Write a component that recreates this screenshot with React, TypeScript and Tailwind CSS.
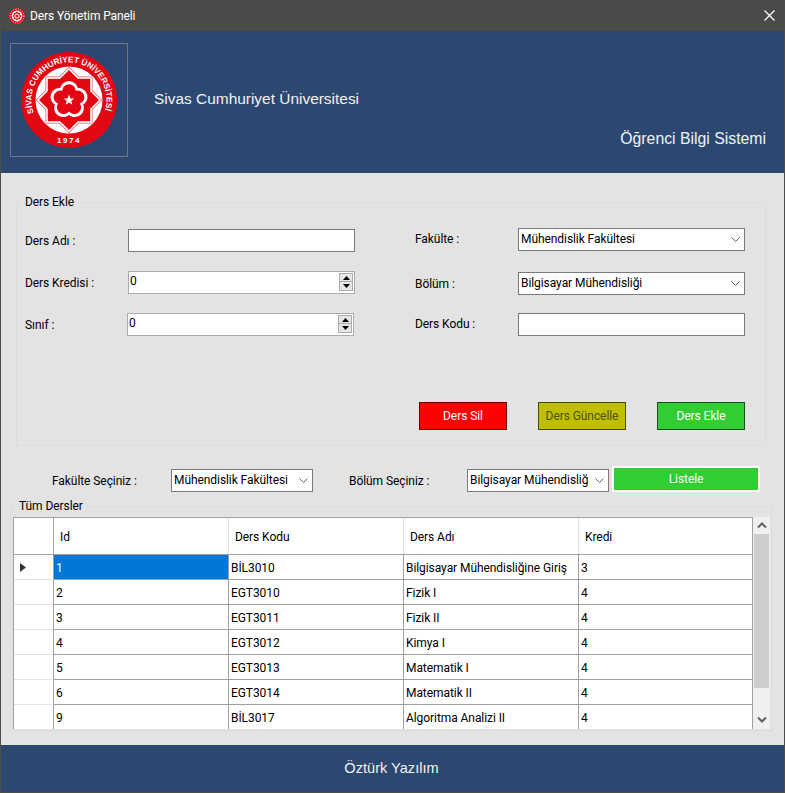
import React from "react";

const ui = "font-['Roboto','Noto_Sans',sans-serif]";

function Logo() {
  const petals = [0, 72, 144, 216, 288];
  return (
    <svg width="96" height="96" viewBox="0 0 96 96">
      <defs>
        <path id="topArc" d="M 12.8 60.8 A 37.5 37.5 0 1 1 83.2 60.8" />
      </defs>
      <circle cx="48" cy="48" r="48" fill="#e30613" />
      <circle cx="48" cy="48" r="33.5" fill="#fff" />
      <rect x="24.5" y="24.5" width="47" height="47" fill="#e8505a" />
      <rect x="24.5" y="24.5" width="47" height="47" fill="#e8505a" transform="rotate(45 48 48)" />
      <rect x="25.2" y="25.2" width="45.6" height="45.6" fill="#fff" />
      <rect x="25.2" y="25.2" width="45.6" height="45.6" fill="#fff" transform="rotate(45 48 48)" />
      <rect x="26.8" y="26.8" width="42.4" height="42.4" fill="#e30613" />
      <rect x="26.8" y="26.8" width="42.4" height="42.4" fill="#e30613" transform="rotate(45 48 48)" />
      {petals.map((a) => (
        <circle key={a} cx="48" cy="38" r="9" fill="#fff" transform={`rotate(${a} 48 48)`} />
      ))}
      {petals.map((a) => (
        <circle key={a} cx="48" cy="39" r="6.8" fill="#e30613" transform={`rotate(${a} 48 48)`} />
      ))}
      <circle cx="48" cy="48" r="9.5" fill="#e30613" />
      <polygon points="48,42.6 49.4,46.4 53.4,46.4 50.2,48.9 51.4,52.8 48,50.5 44.6,52.8 45.8,48.9 42.6,46.4 46.6,46.4" fill="#fff" />
      <text fontFamily="'Liberation Sans',sans-serif" fontSize="8.2" fontWeight="700" fill="#fff">
        <textPath href="#topArc" textLength="141" lengthAdjust="spacing">SİVAS CUMHURİYET ÜNİVERSİTESİ</textPath>
      </text>
      <text x="48" y="90.5" textAnchor="middle" fontFamily="'Liberation Sans',sans-serif" fontSize="8" fontWeight="700" fill="#fff" letterSpacing="1.6">1974</text>
    </svg>
  );
}

function TitleIcon() {
  return (
    <svg width="16" height="16" viewBox="0 0 16 16">
      <circle cx="8" cy="8" r="8" fill="#e30613" />
      <circle cx="8" cy="8" r="7" fill="none" stroke="#fff" strokeWidth="1" strokeDasharray="1 1.4" />
      <circle cx="8" cy="8" r="5.4" fill="#fff" />
      <rect x="4.9" y="4.9" width="6.2" height="6.2" fill="#e30613" />
      <rect x="4.9" y="4.9" width="6.2" height="6.2" fill="#e30613" transform="rotate(45 8 8)" />
      <circle cx="8" cy="8" r="2.6" fill="#f7c6c9" />
      <circle cx="8" cy="8" r="1.3" fill="#e30613" />
    </svg>
  );
}

function Chevron({ className = "" }: { className?: string }) {
  return (
    <svg width="9" height="5" viewBox="0 0 9 5" className={className}>
      <path d="M0.5 0.5 L4.5 4.5 L8.5 0.5" fill="none" stroke="#606060" strokeWidth="1" />
    </svg>
  );
}

function Combo({ text, w }: { text: string; w: string }) {
  return (
    <div className={`${w} h-[23px] bg-white border border-[#7a7a7a] flex items-center pl-[2px] pr-[4px] text-black`}>
      <span className="flex-1 whitespace-nowrap pb-[1px]">{text}</span>
      <Chevron className="shrink-0" />
    </div>
  );
}

function Spin() {
  return (
    <div className="w-[227px] h-[23px] bg-white border border-[#acacac] flex items-start text-black">
      <span className="flex-1 pl-[1px] leading-[18px]">0</span>
      <div className="w-[14px] h-[18px] mt-[1px] mr-[1px] flex flex-col">
        <div className="h-[9px] bg-[#e6e6e6] border border-[#acacac] flex items-center justify-center">
          <svg width="7" height="4" viewBox="0 0 7 4"><path d="M3.5 0 L7 4 H0 Z" fill="#000" /></svg>
        </div>
        <div className="h-[9px] bg-[#e6e6e6] border border-[#acacac] border-t-0 flex items-center justify-center">
          <svg width="7" height="4" viewBox="0 0 7 4"><path d="M0 0 H7 L3.5 4 Z" fill="#000" /></svg>
        </div>
      </div>
    </div>
  );
}

function Btn({ text, cls }: { text: string; cls: string }) {
  return <div className={`w-[88px] h-[28px] border flex items-center justify-center ${cls}`}>{text}</div>;
}

const rows = [
  ["1", "BİL3010", "Bilgisayar Mühendisliğine Giriş", "3"],
  ["2", "EGT3010", "Fizik I", "4"],
  ["3", "EGT3011", "Fizik II", "4"],
  ["4", "EGT3012", "Kimya I", "4"],
  ["5", "EGT3013", "Matematik I", "4"],
  ["6", "EGT3014", "Matematik II", "4"],
  ["9", "BİL3017", "Algoritma Analizi II", "4"],
];

const cols = "grid grid-cols-[40px_175px_175px_175px_173px]";

function Table() {
  return (
    <div className="w-[740px] h-[212px] bg-white overflow-hidden border-t border-x border-[#a0a0a0] text-black">
      <div className={`${cols} h-[37px] border-b border-[#a0a0a0]`}>
        <div className="border-r border-[#a0a0a0]" />
        {["Id", "Ders Kodu", "Ders Adı", "Kredi"].map((h) => (
          <div key={h} className="border-r border-[#e3e3e3] last:border-r-0 pl-[6px] pt-[1px] flex items-center">{h}</div>
        ))}
      </div>
      {rows.map((r, i) => (
        <div key={r[0]} className={`${cols} h-[25px]`}>
          <div className="border-r border-b border-r-[#a0a0a0] border-b-[#e3e3e3] flex items-center pl-[6px]">
            {i === 0 && <svg width="6" height="9" viewBox="0 0 6 9"><path d="M0 0 L6 4.5 L0 9 Z" fill="#333" /></svg>}
          </div>
          {r.map((c, j) => (
            <div key={j} className={`flex items-center pl-[2px] pt-[1px] border-b border-r border-[#a0a0a0] last:border-r-0 whitespace-nowrap ${i === 0 && j === 0 ? "bg-[#0078d7] text-white" : ""}`}>{c}</div>
          ))}
        </div>
      ))}
    </div>
  );
}

function Scrollbar() {
  return (
    <div className="w-[17px] h-[212px] bg-[#f0f0f0] flex flex-col items-center">
      <div className="h-[17px] shrink-0 flex items-center justify-center">
        <svg width="10" height="7" viewBox="0 0 10 7"><path d="M1 5.5 L5 1.5 L9 5.5" fill="none" stroke="#606060" strokeWidth="2" /></svg>
      </div>
      <div className="w-[15px] h-[154px] bg-[#cdcdcd]" />
      <div className="flex-1" />
      <div className="h-[16px] shrink-0 flex items-center justify-center mb-[2px]">
        <svg width="10" height="7" viewBox="0 0 10 7"><path d="M1 1.5 L5 5.5 L9 1.5" fill="none" stroke="#606060" strokeWidth="2" /></svg>
      </div>
    </div>
  );
}

export default function App() {
  return (
    <div className={`${ui} w-[785px] h-[793px] bg-[#e3e3e3] border-x border-b border-[#4d4d4d] flex flex-col overflow-hidden`}>
      <div className="h-[31px] shrink-0 bg-[#4b4a48] flex items-center text-white text-[12px] tracking-[-0.1px] pl-[8px] pr-[9px]">
        <TitleIcon />
        <span className="ml-[5px] flex-1">Ders Yönetim Paneli</span>
        <svg width="11" height="11" viewBox="0 0 11 11"><path d="M0.5 0.5 L10.5 10.5 M10.5 0.5 L0.5 10.5" stroke="#fff" strokeWidth="1.2" /></svg>
      </div>

      <div className="h-[142px] shrink-0 bg-[#2c4870] flex pl-[9px] pt-[12px] pr-[18px] font-['Liberation_Sans',sans-serif] text-[#f2f2f2]">
        <div className="w-[118px] h-[114px] shrink-0 border border-[#6d7685] flex items-center justify-center">
          <Logo />
        </div>
        <div className="flex-1 flex justify-between">
          <span className="ml-[26px] mt-[44px] text-[15.45px]">Sivas Cumhuriyet Üniversitesi</span>
          <span className="mt-[84px] text-[15.8px]">Öğrenci Bilgi Sistemi</span>
        </div>
      </div>

      <div className="flex-1 flex flex-col text-[12px] tracking-[-0.07px] text-black">
        <div className="relative mt-[29px] ml-[15px] w-[750px] h-[244px] border border-[#dcdcdc]">
          <span className="absolute left-[4px] -top-[8px] bg-[#e3e3e3] px-[4px] leading-[14px]">Ders Ekle</span>
          <div className="grid grid-cols-[398px_1fr] pt-[26px] pl-[8px]">
            <div className="flex flex-col">
              <div className="flex items-center h-[23px]">
                <span className="w-[103px]">Ders Adı :</span>
                <div className="w-[227px] h-[23px] bg-white border border-[#7a7a7a]" />
              </div>
              <div className="flex items-center h-[23px] mt-[19px]">
                <span className="w-[103px]">Ders Kredisi :</span>
                <Spin />
              </div>
              <div className="flex items-center h-[23px] mt-[19px]">
                <span className="w-[102px]">Sınıf :</span>
                <Spin />
              </div>
            </div>
            <div className="flex flex-col -mt-[1px] -ml-[8px]">
              <div className="flex items-center h-[23px]">
                <span className="w-[103px] pb-[1px]">Fakülte :</span>
                <Combo text="Mühendislik Fakültesi" w="w-[227px]" />
              </div>
              <div className="flex items-center h-[23px] mt-[21px]">
                <span className="w-[103px]">Bölüm :</span>
                <Combo text="Bilgisayar Mühendisliği" w="w-[227px]" />
              </div>
              <div className="flex items-center h-[23px] mt-[18px]">
                <span className="w-[103px] pb-[1px]">Ders Kodu :</span>
                <div className="w-[227px] h-[23px] bg-white border border-[#7a7a7a]" />
              </div>
            </div>
          </div>
          <div className="flex justify-end gap-[31px] pr-[20px] mt-[66px]">
            <Btn text="Ders Sil" cls="bg-[#ff0000] border-[#6b0000] text-white" />
            <Btn text="Ders Güncelle" cls="bg-[#bfbf00] border-[#4a4a00] text-[#4f4f00]" />
            <Btn text="Ders Ekle" cls="bg-[#32cd32] border-[#145214] text-white" />
          </div>
        </div>

        <div className="flex items-end h-[26px] mt-[20px] pl-[51px]">
          <span className="w-[119px] h-[23px] flex items-center">Fakülte Seçiniz :</span>
          <Combo text="Mühendislik Fakültesi" w="w-[142px]" />
          <span className="w-[118px] ml-[36px] h-[23px] flex items-center">Bölüm Seçiniz :</span>
          <Combo text="Bilgisayar Mühendisliğ" w="w-[142px]" />
          <div className="w-[148px] h-[26px] ml-[3px] border-2 border-white bg-[#32cd32] text-white flex items-center justify-center">Listele</div>
        </div>

        <div className="relative mt-[14px] ml-[9px] w-[762px] h-[225px] border border-[#dcdcdc] pt-[10px] pl-[2px] flex">
          <span className="absolute left-[4px] -top-[8px] bg-[#e3e3e3] px-[4px] leading-[14px]">Tüm Dersler</span>
          <Table />
          <Scrollbar />
        </div>
      </div>

      <div className="h-[47px] shrink-0 bg-[#2c4870] flex items-center justify-center pr-[2px] font-['Liberation_Sans',sans-serif] text-[14.6px] text-[#f2f2f2]">Öztürk Yazılım</div>
    </div>
  );
}
